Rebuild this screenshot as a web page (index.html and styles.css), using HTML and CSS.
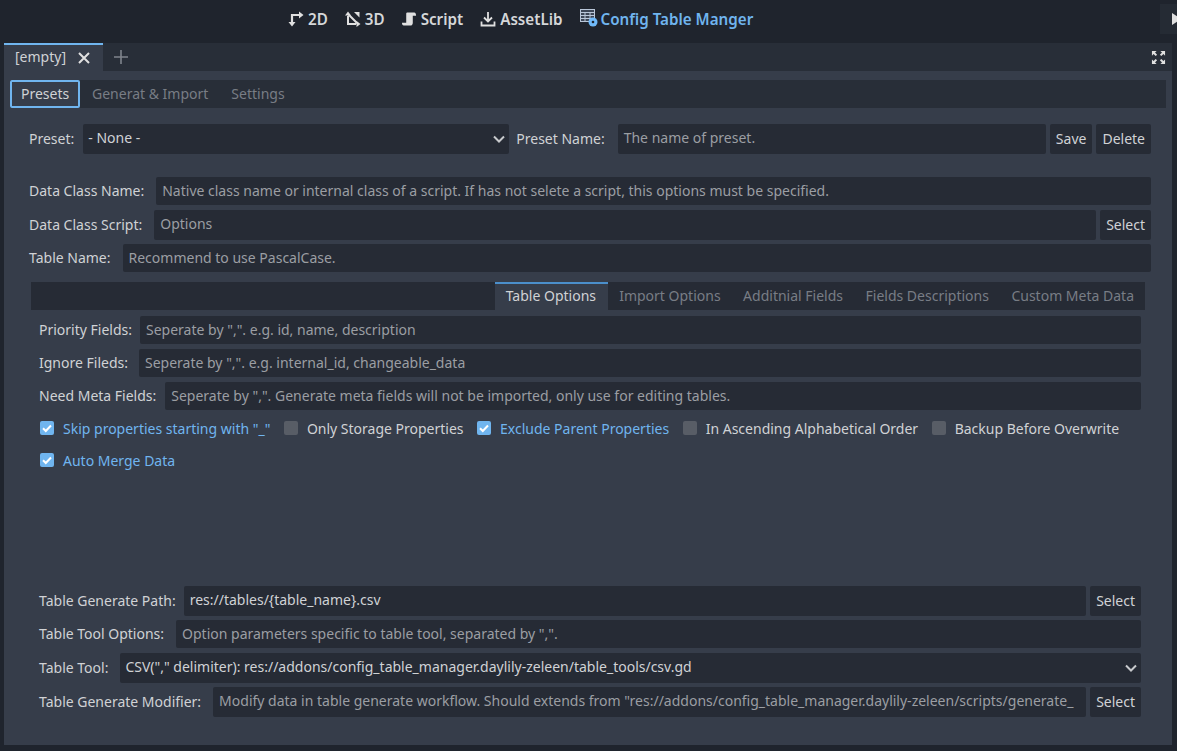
FILE: index.html
```html
<!DOCTYPE html>
<html lang="en">
<head>
    <meta charset="UTF-8">
    <title>Config Table Manger</title>
    <link rel="stylesheet" href="styles.css">
</head>
<body>
    <header class="top-bar">
        <a class="top-item">
            <svg viewBox="0 0 16 16"><path d="M4 12V4h7" fill="none" stroke="#e0e0e0" stroke-width="2.200"/><path d="M11 0.500l4.500 3.500L11 7.500zM0.500 11h7L4 15.500z" fill="#e0e0e0"/></svg>
            2D
        </a>
        <a class="top-item">
            <svg viewBox="0 0 16 16"><path d="M3 5V13h8M3 3l10 10" fill="none" stroke="#e0e0e0" stroke-width="2"/><path d="M3 0.500l3 4H0zM15.500 13l-4 3v-6zM14.500 1v5.500L9 1z" fill="#e0e0e0"/></svg>
            3D
        </a>
        <a class="top-item">
            <svg class="script-icon" viewBox="0 0 16 16"><path d="M5.500 1h7.500c1.500 0 2 1.500 2 3.500h-3.500V12c0 2-1 3-2.500 3H2c-1.500 0-2-1.200-2-3h4.500V3c0-1 0-2 1-2z" fill="#e0e0e0"/></svg>
            Script
        </a>
        <a class="top-item">
            <svg viewBox="0 0 16 16"><path d="M8 1v9M4 6.500L8 10.500l4-4M1.500 10.500v4h13v-4" fill="none" stroke="#e0e0e0" stroke-width="1.800"/></svg>
            AssetLib
        </a>
        <a class="top-item top-item-active">
            <svg class="config-icon" viewBox="0 0 18 18">
                <rect x="0.500" y="0.500" width="14" height="12" fill="#3d4656" stroke="#b9c6d8"/>
                <path d="M0.500 3.500h14M0.500 6.500h14M0.500 9.500h14M5 3.500v9M10 3.500v9" stroke="#b9c6d8" fill="none"/>
                <circle cx="13" cy="13" r="4.500" fill="#70bafa"/>
                <circle cx="13" cy="13" r="1.300" fill="#1f242d"/>
            </svg>
            Config Table Manger
        </a>
        <div class="play-btn"><span class="play-icon"></span></div>
    </header>

    <div class="tab-strip">
        <div class="doc-tab">
            <span class="doc-title">[empty]</span>
            <svg class="close-icon" viewBox="0 0 12 12"><path d="M1 1l10 10M11 1L1 11" stroke="#e0e0e0" stroke-width="2"/></svg>
        </div>
        <svg class="add-icon" viewBox="0 0 14 14"><path d="M7 0v14M0 7h14" stroke="#7f848c" stroke-width="1.600"/></svg>
        <svg class="expand-icon" viewBox="0 0 16 16"><path d="M1 6V1h5L4.300 2.700 6.500 5 5 6.500 2.700 4.300zM15 6V1h-5l1.700 1.700L9.500 5 11 6.500l2.300-2.200zM1 10v5h5l-1.700-1.700L6.500 11 5 9.500l-2.300 2.200zM15 10v5h-5l1.700-1.700L9.500 11 11 9.500l2.300 2.200z" fill="#e0e0e0"/></svg>
    </div>

    <main class="panel">
        <nav class="inner-tabs">
            <span class="inner-tab inner-tab-focus">Presets</span>
            <span class="inner-tab">Generat &amp; Import</span>
            <span class="inner-tab">Settings</span>
        </nav>

        <section class="form">
            <div class="row row-preset">
                <label class="lbl-5">Preset:</label>
                <div class="field select select-preset">- None -<svg class="chevron" viewBox="0 0 12 8"><path d="M1 1.500l5 5 5-5" fill="none" stroke="#c8cacd" stroke-width="2"/></svg></div>
                <label class="label-gap">Preset Name:</label>
                <div class="field grow">The name of preset.</div>
                <button class="btn">Save</button>
                <button class="btn">Delete</button>
            </div>

            <div class="row row-data-name">
                <label class="lbl-8">Data Class Name:</label>
                <div class="field grow short">Native class name or internal class of a script. If has not selete a script, this options must be specified.</div>
            </div>
            <div class="row row-script">
                <label class="lbl-8">Data Class Script:</label>
                <div class="field grow">Options</div>
                <button class="btn btn-select">Select</button>
            </div>
            <div class="row row-tight">
                <label class="lbl-8">Table Name:</label>
                <div class="field grow short">Recommend to use PascalCase.</div>
            </div>

            <div class="sub-tabs">
                <span class="sub-tab sub-tab-active">Table Options</span>
                <span class="sub-tab">Import Options</span>
                <span class="sub-tab">Additnial Fields</span>
                <span class="sub-tab">Fields Descriptions</span>
                <span class="sub-tab">Custom Meta Data</span>
            </div>

            <div class="sub-panel">
                <div class="row">
                    <label class="lbl-4">Priority Fields:</label>
                    <div class="field grow short">Seperate by ",". e.g. id, name, description</div>
                </div>
                <div class="row row-option">
                    <label class="lbl-7">Ignore Fileds:</label>
                    <div class="field grow short">Seperate by ",". e.g. internal_id, changeable_data</div>
                </div>
                <div class="row row-option">
                    <label class="lbl-5">Need Meta Fields:</label>
                    <div class="field grow short">Seperate by ",". Generate meta fields will not be imported, only use for editing tables.</div>
                </div>

                <div class="checks">
                    <span class="check check-on"><i class="box"><svg viewBox="0 0 14 14"><path d="M3 7.200l2.800 2.800L11 4.500" fill="none" stroke="#fff" stroke-width="2"/></svg></i>Skip properties starting with "_"</span>
                    <span class="check"><i class="box"></i>Only Storage Properties</span>
                    <span class="check check-on"><i class="box"><svg viewBox="0 0 14 14"><path d="M3 7.200l2.800 2.800L11 4.500" fill="none" stroke="#fff" stroke-width="2"/></svg></i>Exclude Parent Properties</span>
                    <span class="check"><i class="box"></i>In Ascending Alphabetical Order</span>
                    <span class="check"><i class="box"></i>Backup Before Overwrite</span>
                    <span class="check check-on"><i class="box"><svg viewBox="0 0 14 14"><path d="M3 7.200l2.800 2.800L11 4.500" fill="none" stroke="#fff" stroke-width="2"/></svg></i>Auto Merge Data</span>
                </div>

                <div class="bottom-rows">
                    <div class="row">
                        <label class="lbl-4">Table Generate Path:</label>
                        <div class="field grow value">res://tables/{table_name}.csv</div>
                        <button class="btn btn-select">Select</button>
                    </div>
                    <div class="row">
                        <label class="lbl-8">Table Tool Options:</label>
                        <div class="field grow short">Option parameters specific to table tool, separated by ",".</div>
                    </div>
                    <div class="row row-tool">
                        <label class="lbl-8">Table Tool:</label>
                        <div class="field select grow value">CSV("," delimiter): res://addons/config_table_manager.daylily-zeleen/table_tools/csv.gd<svg class="chevron" viewBox="0 0 12 8"><path d="M1 1.500l5 5 5-5" fill="none" stroke="#c8cacd" stroke-width="2"/></svg></div>
                    </div>
                    <div class="row">
                        <label class="lbl-8">Table Generate Modifier:</label>
                        <div class="field grow">Modify data in table generate workflow. Should extends from "res://addons/config_table_manager.daylily-zeleen/scripts/generate_</div>
                        <button class="btn btn-select">Select</button>
                    </div>
                </div>
            </div>
        </section>
    </main>
</body>
</html>
```

FILE: styles.css
```css
* {
    margin: 0;
    padding: 0;
    box-sizing: border-box;
}

html, body {
    height: 100%;
}

body {
    width: 1177px;
    height: 751px;
    overflow: hidden;
    background: #1f242d;
    font-family: "Noto Sans", "Open Sans", sans-serif;
    font-size: 14px;
    color: #dcdee0;
    display: flex;
    flex-direction: column;
}

.top-bar {
    height: 43px;
    display: flex;
    align-items: center;
    padding-left: 288px;
    padding-bottom: 5px;
    gap: 17px;
    flex: none;
}

.top-item {
    display: flex;
    align-items: center;
    gap: 4px;
    font-size: 15.2px;
    font-weight: 600;
    color: #d5d7d9;
}

.top-item svg {
    width: 16px;
    height: 16px;
}

.top-item .script-icon {
    width: 15px;
}

.top-item .config-icon {
    width: 18px;
    height: 18px;
    margin-top: -2px;
    margin-right: -1px;
}

.top-item-active {
    color: #70b5ef;
}

.play-btn {
    margin-left: auto;
    width: 17px;
    height: 30px;
    background: #252b34;
    display: flex;
    align-items: center;
    padding-left: 12px;
    overflow: hidden;
}

.play-icon {
    border-left: 9px solid #e0e0e0;
    border-top: 6px solid transparent;
    border-bottom: 6px solid transparent;
}

.tab-strip {
    height: 28px;
    margin: 0 5px 0 4px;
    background: #282e38;
    display: flex;
    align-items: center;
    flex: none;
}

.doc-tab {
    width: 99px;
    height: 28px;
    background: #363d4a;
    border-top: 2px solid #70b5ef;
    display: flex;
    align-items: center;
    padding-left: 11px;
    gap: 12px;
    color: #d0d2d5;
}

.doc-title {
    margin-top: -3px;
}

.close-icon {
    width: 12px;
    height: 12px;
}

.add-icon {
    width: 14px;
    height: 14px;
    margin-left: 11px;
}

.expand-icon {
    width: 15px;
    height: 15px;
    margin-left: auto;
    margin-right: 6px;
}

.panel {
    height: 674px;
    margin: 0 5px 0 4px;
    background: #363d4a;
    padding: 9px 6px 0;
    flex: none;
}

.inner-tabs {
    height: 28px;
    background: #282e38;
    display: flex;
}

.inner-tab {
    height: 28px;
    padding: 0 11px 0 12px;
    line-height: 27px;
    color: #787d85;
}

.inner-tab-focus {
    width: 70px;
    color: #d0d2d5;
    background: #363d4a;
    border: 2px solid #70b5ef;
    border-radius: 2px;
    padding: 0 9px;
    line-height: 24px;
}

.form {
    padding: 16px 15px 0 19px;
}

.row {
    display: flex;
    align-items: center;
    gap: 4px;
    min-height: 28px;
}

.row label {
    padding-bottom: 2px;
    color: #d0d2d5;
    white-space: nowrap;
}

.lbl-4 {
    margin-right: 4px;
}

.lbl-5 {
    margin-right: 5px;
}

.lbl-7 {
    margin-right: 7px;
}

.lbl-8 {
    margin-right: 8px;
}

.row-preset {
    height: 30px;
}

.row-preset .label-gap {
    margin-left: 3px;
    margin-right: 9px;
}

.row-data-name {
    margin-top: 23px;
}

.row-script {
    margin-top: 5px;
}

.row-tight {
    margin-top: 4px;
}

.row-option {
    margin-top: 5px;
}

.row-tool {
    margin-top: 1px;
}

.field {
    height: 30px;
    background: #262b35;
    border-radius: 2px;
    padding: 0 6px;
    line-height: 27px;
    color: #9b9ea3;
    position: relative;
    white-space: nowrap;
    overflow: hidden;
}

.field.short {
    height: 28px;
    line-height: 27px;
}

.field.value {
    color: #d0d2d5;
}

.grow {
    flex: 1;
    min-width: 0;
}

.select {
    padding-left: 5px;
    color: #d0d2d5;
}

.select-preset {
    width: 426px;
}

.chevron {
    position: absolute;
    right: 4px;
    top: 11px;
    width: 12px;
    height: 8px;
}

.btn {
    height: 30px;
    padding: 0 6px 2px;
    border: none;
    border-radius: 2px;
    background: #262b35;
    color: #d0d2d5;
    font: inherit;
}

.sub-tabs {
    height: 28px;
    margin: 10px 6px 0 2px;
    background: #262b35;
    display: flex;
    justify-content: flex-end;
}

.sub-tab {
    padding: 0 11px 0 11.500px;
    line-height: 27px;
    color: #787d85;
}

.sub-tab-active {
    width: 113px;
    padding: 0 11px;
    background: #363d4a;
    border-top: 2px solid #4b8fcb;
    color: #d0d2d5;
    line-height: 23px;
}

.sub-panel {
    padding: 6px 10px 0;
}

.checks {
    display: flex;
    flex-wrap: wrap;
    column-gap: 13.500px;
    margin-top: 2px;
    padding-left: 1px;
}

.check {
    height: 32px;
    display: flex;
    align-items: center;
    gap: 9px;
    color: #d0d2d5;
}

.check-on {
    color: #70b5ef;
}

.box {
    width: 14px;
    height: 14px;
    border-radius: 2px;
    background: #585d66;
    display: block;
}

.check-on .box {
    background: #70b5ef;
}

.box svg {
    display: block;
}

.check:nth-child(6) {
    flex-basis: 100%;
}

.bottom-rows {
    margin-top: 110px;
    display: flex;
    flex-direction: column;
    gap: 4px;
}
```
